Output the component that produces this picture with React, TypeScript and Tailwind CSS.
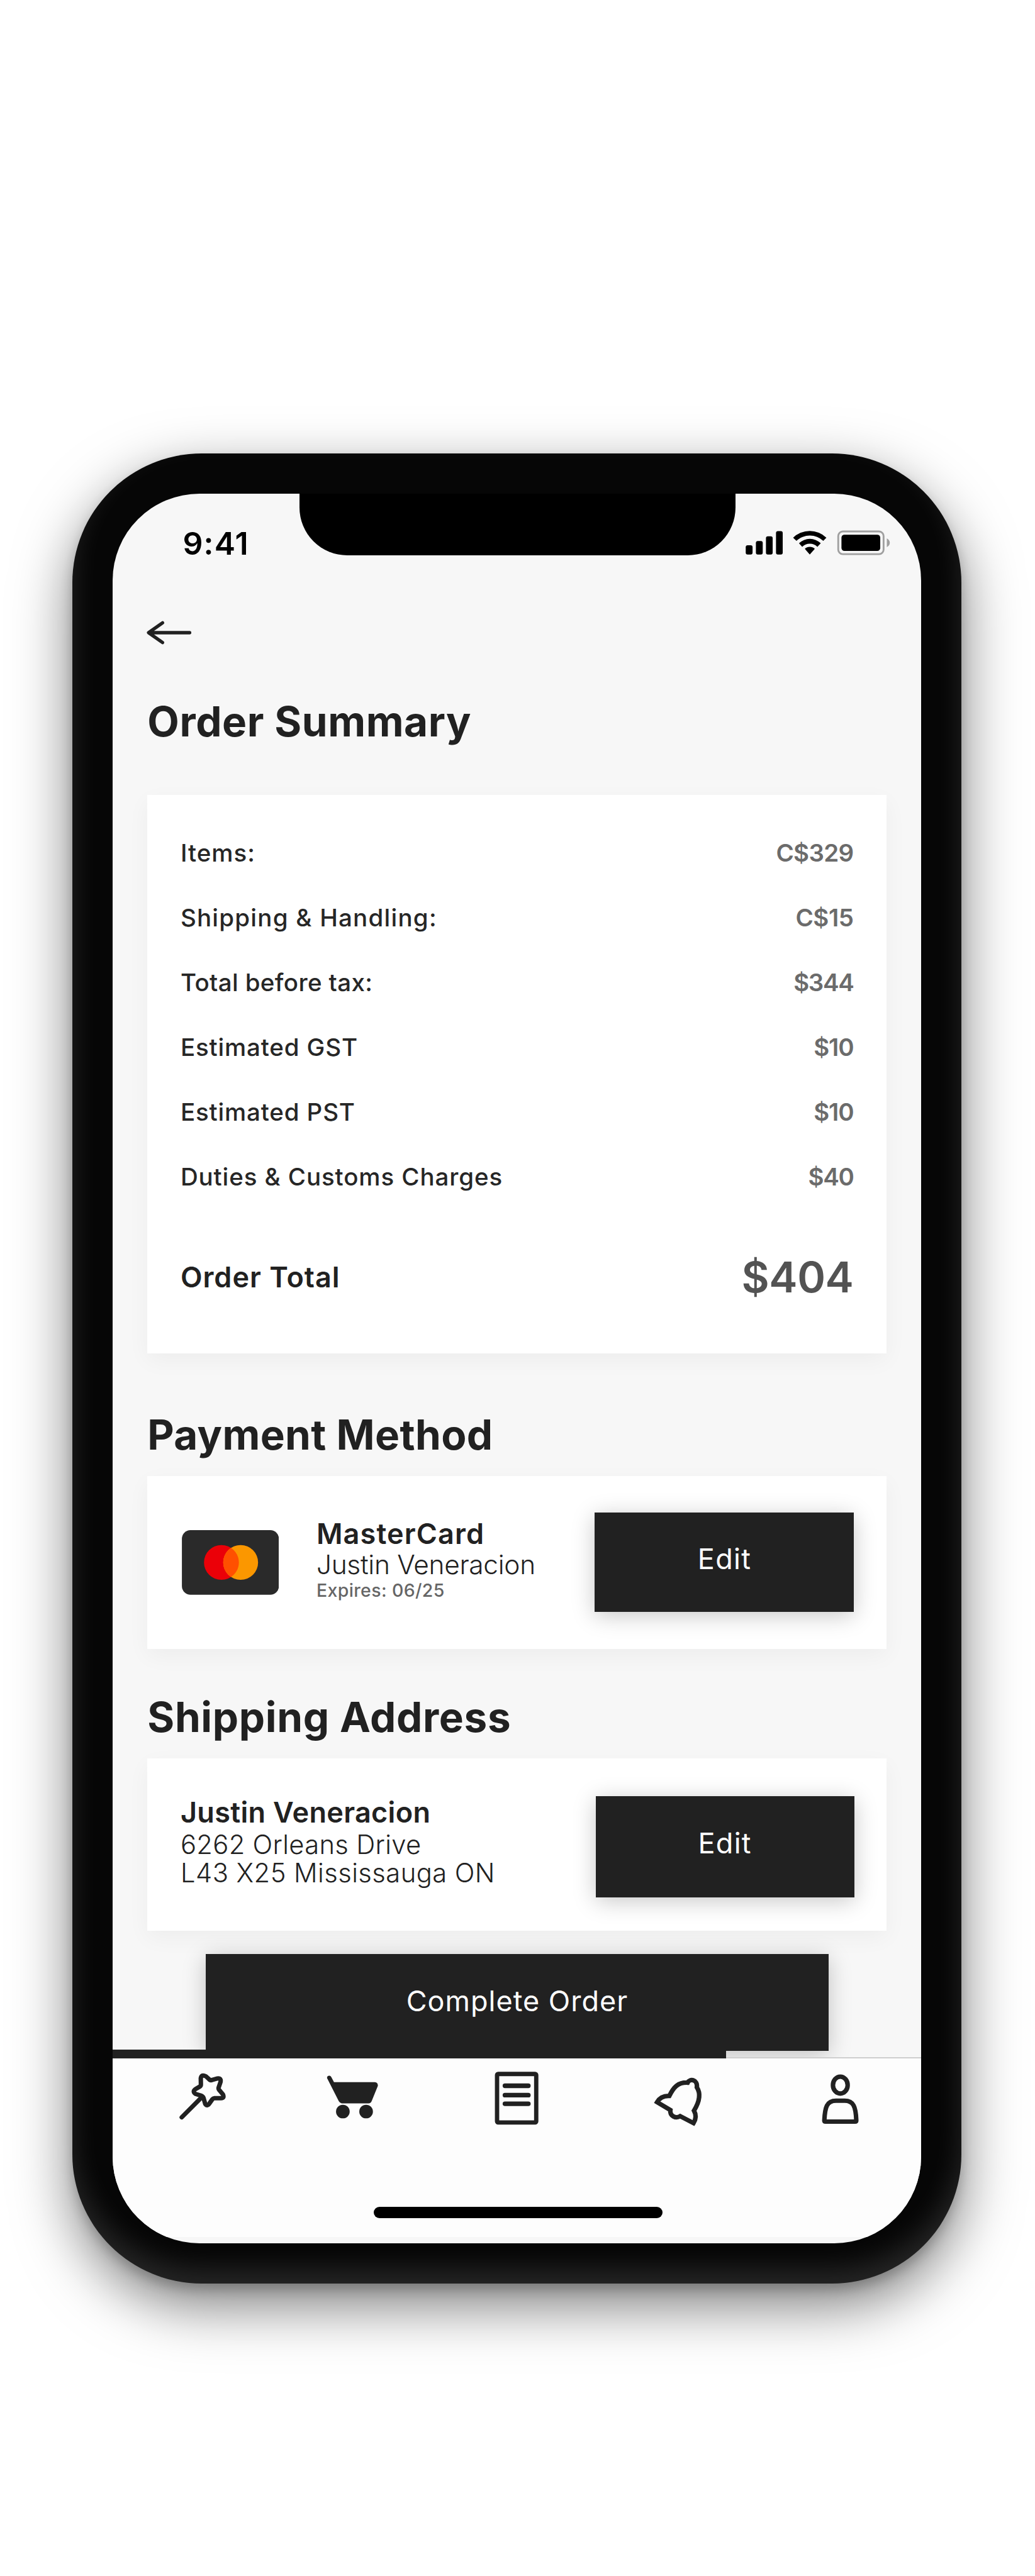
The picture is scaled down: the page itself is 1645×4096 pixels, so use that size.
const summary = [
  { label: "Items:", value: "C$329", labelClass: "tracking-[0.99px]", valueClass: "tracking-[-0.72px]" },
  { label: "Shipping & Handling:", value: "C$15", labelClass: "tracking-[1.23px]", valueClass: "tracking-[-0.5px]" },
  { label: "Total before tax:", value: "$344", labelClass: "tracking-[0.38px]", valueClass: "tracking-[-1.4px]" },
  { label: "Estimated GST", value: "$10", labelClass: "tracking-[0.85px]", valueClass: "tracking-[-1.2px]" },
  { label: "Estimated PST", value: "$10", labelClass: "tracking-[0.85px]", valueClass: "tracking-[-1.2px]" },
  { label: "Duties & Customs Charges", value: "$40", labelClass: "tracking-[0.9px]", valueClass: "tracking-[-1.4px]" },
];

function StatusIcons() {
  return (
    <svg className="ml-auto mr-[48.8px] mt-[57.8px] h-[40.9px] w-[231.3px]" viewBox="40 105 1215 215">
      <rect x="46" y="237" width="57" height="77" rx="16" />
      <rect x="131" y="201" width="57" height="113" rx="16" />
      <rect x="215" y="161" width="56" height="153" rx="16" />
      <rect x="299" y="118" width="56" height="196" rx="16" />
      <path d="M442 173 A200 200 0 0 1 720 173 L694 200 A163 163 0 0 0 470 200 Z" />
      <path d="M491 220 A130 130 0 0 1 673 220 L645 249 A92 92 0 0 0 518 249 Z" />
      <path d="M540 267 A58 58 0 0 1 623 267 L581 314 Z" />
      <rect x="819" y="121" width="379" height="190" rx="38" fill="none" stroke="#a0a0a0" strokeWidth="15" />
      <rect x="846" y="148" width="324" height="136" rx="25" />
      <path d="M1225 179 C1242 188 1250 202 1250 215 C1250 229 1242 243 1225 252 Z" fill="#a0a0a0" />
    </svg>
  );
}

function BackArrow() {
  return (
    <svg className="-ml-[2.1px] h-[38px] w-[73px] shrink-0" viewBox="0 0 128 67" fill="none" stroke="#212121" strokeWidth="9.5" strokeLinecap="round" strokeLinejoin="round">
      <path d="M46 6 L7 33.5 L46 61 M8 33.5 H122" />
    </svg>
  );
}

function MasterCardLogo() {
  return (
    <svg className="ml-[54.5px] mt-[85.8px] h-[102.8px] w-[154.4px] shrink-0" viewBox="0 0 270 180">
      <rect width="270" height="180" rx="24" fill="#2a2a2a" />
      <circle cx="110" cy="90" r="48.5" fill="#eb0008" />
      <circle cx="163.5" cy="90" r="48.5" fill="#fb9700" />
      <path d="M136.75 49.5 A48.5 48.5 0 0 1 136.75 130.5 A48.5 48.5 0 0 1 136.75 49.5 Z" fill="#ff5000" />
    </svg>
  );
}

function TabBar() {
  return (
    <nav className="relative flex h-[284.2px] items-start bg-[#fdfdfd] text-[#212121]">
      <svg className="ml-[94.9px] mt-[11.5px] h-[102.8px] w-[102.8px] shrink-0" viewBox="0 0 540 540" fill="none" stroke="currentColor" strokeWidth="37" strokeLinecap="round" strokeLinejoin="round">
        <path d="M78 434 L246 265" />
        <path d="M237 108 Q243 72 280 92 L312 121 Q321 127 334 121 L375 110 Q408 104 402 139 L386 186 Q383 195 389 203 L422 243 Q436 274 407 274 L351 274 Q340 275 334 283 L307 321 Q291 345 274 322 L261 276 Q258 261 243 254 L194 239 Q165 220 191 200 L228 178 Q238 172 238 160 Z" />
      </svg>
      <svg className="ml-[131.3px] mt-[11.5px] h-[102.8px] w-[102.8px] shrink-0" viewBox="0 0 540 540" fill="currentColor">
        <path d="M62 107 C60 86 86 80 97 97 L120 140 H461 Q489 144 486 172 L436 295 Q427 318 409 318 H184 Q169 316 160 300 Z" />
        <circle cx="194" cy="386" r="57" />
        <circle cx="388" cy="386" r="57" />
      </svg>
      <svg className="ml-[171.4px] mt-[17.3px] h-[91.4px] w-[80px] shrink-0" viewBox="1370 5760 140 160" fill="none" stroke="currentColor" strokeWidth="12" strokeLinecap="round" strokeLinejoin="round">
        <rect x="1384" y="5773.5" width="109" height="135" rx="3" />
        <path d="M1406 5806.5 H1471 M1406 5832.5 H1471 M1406 5856.5 H1471" strokeWidth="13" />
      </svg>
      <svg className="ml-[165.6px] mt-[17.2px] h-[102.8px] w-[102.8px] shrink-0" viewBox="0 0 540 540" fill="none" stroke="currentColor" strokeWidth="38" strokeMiterlimit="10">
        <path d="M86 276 C108 238 141 222 188 224 C224 150 260 110 341 113 C356 79 425 82 418 152 C451 202 444 265 394 347 C414 383 411 418 390 451 L279 393 C243 416 191 393 197 342 Z" />
      </svg>
      <svg className="ml-[171.4px] mt-[17.3px] h-[91.4px] w-[68.5px] shrink-0" viewBox="2280 5760 120 160" fill="none" stroke="currentColor" strokeWidth="12.5" strokeLinejoin="round">
        <ellipse cx="2338.8" cy="5804.5" rx="20.5" ry="23.5" />
        <path d="M2294.3 5903 C2296 5866 2301 5848 2327 5848 H2351 C2375 5848 2382 5864 2383.3 5903 Q2383.3 5906.3 2380 5906.3 H2297.6 Q2294.3 5906.3 2294.3 5903 Z" />
      </svg>
      <div className="absolute bottom-[29.7px] left-[414.6px] h-[17.9px] w-[459.6px] rounded-full bg-black" />
    </nav>
  );
}

const cardClass = "bg-white shadow-[0_11px_34px_rgba(0,0,0,0.045)]";
const buttonShadow = "shadow-[0_6px_34px_rgba(0,0,0,0.22)]";

export default function App() {
  return (
    <div className="h-[4096px] w-[1645px] overflow-hidden bg-white pt-[720.8px] font-['Inter',sans-serif] text-[#212121]">
      <div className="ml-[115.4px] h-[2910.4px] w-[1413px] rounded-[205.6px] bg-[#060606] p-[63.9px] shadow-[inset_0_-24px_44px_rgba(255,255,255,0.13),0_34px_92px_rgba(0,0,0,0.52),0_10px_18px_rgba(0,0,0,0.18)]">
        <div className="relative flex h-[2782.7px] w-[1285px] flex-col overflow-hidden rounded-[138px] bg-[#f7f7f7]">
          <div className="absolute left-[296.7px] top-0 h-[98px] w-[692.6px] rounded-b-[76px] bg-black" />

          <header className="flex h-[170px] shrink-0 items-start">
            <time className="ml-[111.1px] mt-[54.1px] text-[50px] font-semibold leading-none tracking-[1.2px] text-black">9:41</time>
            <StatusIcons />
          </header>

          <main className="flex h-[2318.1px] shrink-0 flex-col overflow-hidden px-[55px] pt-[31.9px]">
            <BackArrow />
            <h1 className="mt-[90.9px] text-[65.6px] font-bold leading-none tracking-[0.6px]">Order Summary</h1>

            <section className={`${cardClass} mt-[83.3px] flex h-[887.5px] shrink-0 flex-col pl-[52.6px] pr-[52.9px] pt-[41.1px]`}>
              {summary.map((row) => (
                <div key={row.label} className="flex h-[102.9px] justify-between text-[38.5px] leading-[102.9px]">
                  <span className={`font-medium text-[#262626] ${row.labelClass}`}>{row.label}</span>
                  <span className={`font-semibold text-[#6b6b6b] ${row.valueClass}`}>{row.value}</span>
                </div>
              ))}
              <div className="flex h-[216px] items-center justify-between font-semibold leading-none">
                <span className="text-[45px] tracking-[1px]">Order Total</span>
                <span className="pb-[2px] text-[68px] tracking-[-0.46px] text-[#535353]">$404</span>
              </div>
            </section>

            <h2 className="mt-[97.3px] text-[65.6px] font-bold leading-none tracking-[0.35px]">Payment Method</h2>
            <section className={`${cardClass} mt-[32.6px] flex h-[274.4px] shrink-0 items-start`}>
              <MasterCardLogo />
              <div className="ml-[59.8px] mt-[68.8px] whitespace-nowrap leading-none">
                <div className="text-[45px] font-semibold leading-none tracking-[1.12px]">MasterCard</div>
                <div className="mt-[5.6px] text-[42.4px] font-light leading-none tracking-[-0.3px]">Justin Veneracion</div>
                <div className="mt-[5.5px] text-[28.5px] font-medium leading-none tracking-[0.36px] text-[#666]">Expires: 06/25</div>
              </div>
              <button className={`${buttonShadow} ml-auto mr-[52.5px] mt-[57.3px] flex h-[158.2px] w-[411.5px] items-center justify-center bg-[#212121] pb-[10.4px] pl-[1px] text-[45px] leading-none tracking-[1.3px] text-white`}>
                Edit
              </button>
            </section>

            <h2 className="mt-[76.2px] text-[65.6px] font-bold leading-none tracking-[0.65px]">Shipping Address</h2>
            <section className={`${cardClass} mt-[32.6px] flex h-[274.3px] shrink-0 items-start`}>
              <div className="ml-[52.7px] mt-[62.7px] whitespace-nowrap">
                <div className="text-[45px] font-semibold leading-none tracking-[0.31px]">Justin Veneracion</div>
                <div className="mt-[8.9px] text-[41.7px] font-light leading-none tracking-[0.32px]">6262 Orleans Drive</div>
                <div className="mt-[3.2px] text-[41.7px] font-light leading-none tracking-[0.46px]">L43 X25 Mississauga ON</div>
              </div>
              <button className={`${buttonShadow} ml-auto mr-[51.6px] mt-[60px] flex h-[161px] w-[411px] items-center justify-center bg-[#212121] pb-[12px] text-[45px] leading-none tracking-[1.3px] text-white`}>
                Edit
              </button>
            </section>

            <button className={`${buttonShadow} ml-[92.5px] mt-[36.6px] flex h-[154.3px] w-[990.3px] shrink-0 items-center justify-center bg-[#212121] pb-[6.2px] text-[45px] leading-none tracking-[1px] text-white`}>
              Complete Order
            </button>
            <div className="-mx-[55px] -mt-[2px] flex h-[13.5px] shrink-0 items-end">
              <div className="z-10 h-full w-[974.3px] bg-[#212121]" />
              <div className="z-10 h-[2px] flex-1 bg-[#cfcfcf]" />
            </div>
          </main>

          <TabBar />
        </div>
      </div>
    </div>
  );
}
